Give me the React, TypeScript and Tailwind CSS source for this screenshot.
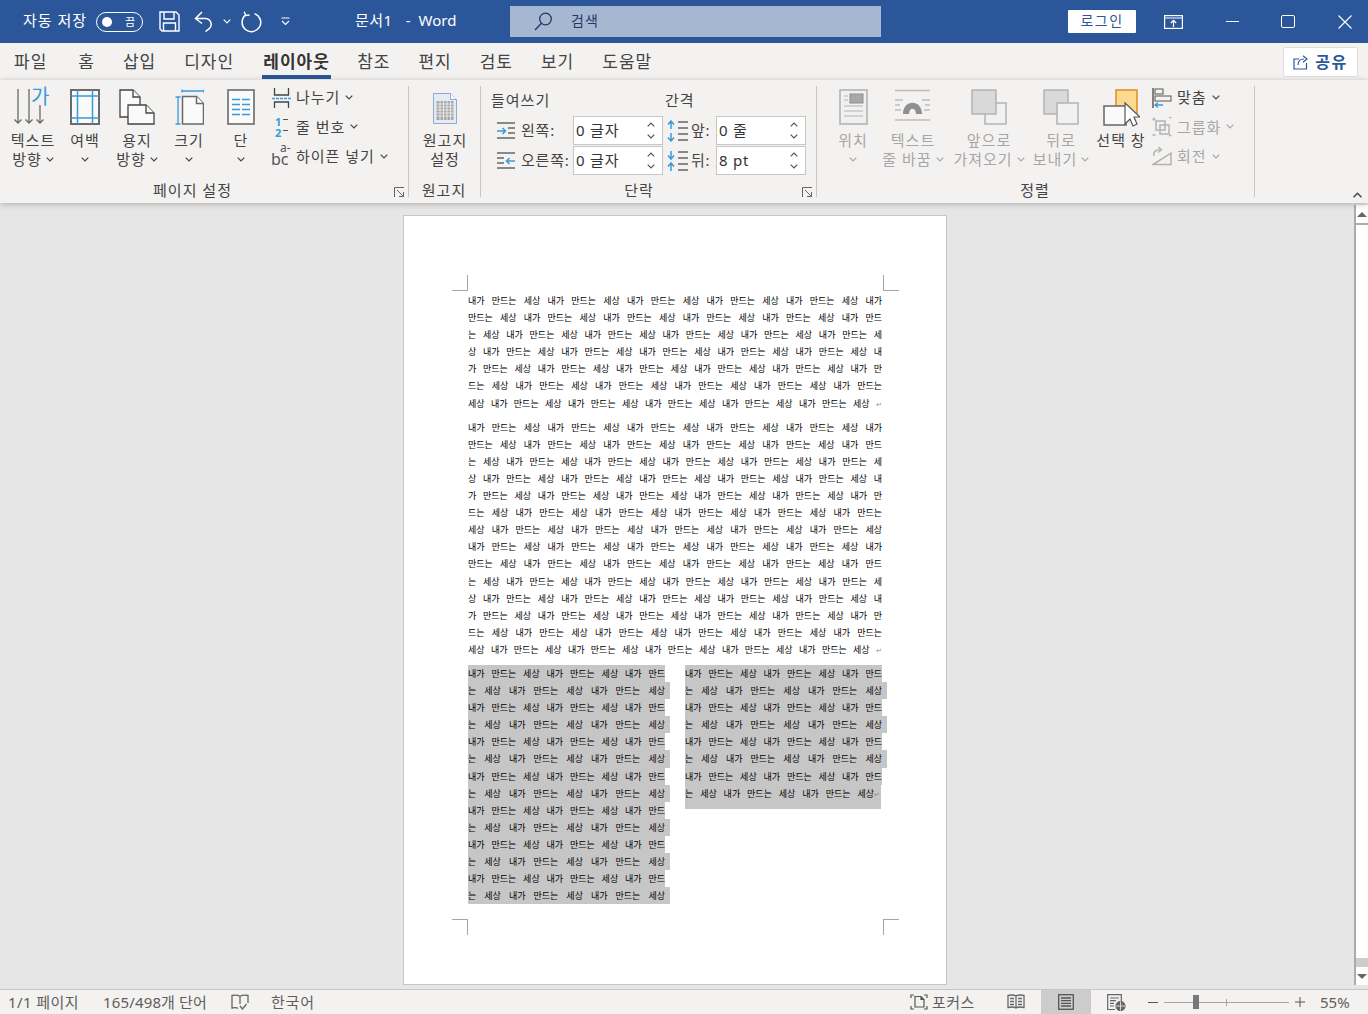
import type { ReactNode } from "react"

const GRAY = "#6a6a6a"
const BLUE = "#3a9ad9"

function Chevron({ color = "#444", up = false, className = "" }: { color?: string; up?: boolean; className?: string }) {
  return (
    <svg width="8" height="5" viewBox="0 0 8 5" fill="none" stroke={color} strokeWidth="1.2" className={`inline-block shrink-0 ${className}`}>
      <path d={up ? "M.7 4.3 4 1l3.3 3.3" : "M.7.7 4 4 7.3.7"} />
    </svg>
  )
}

function Launcher() {
  return (
    <svg width="11" height="11" viewBox="0 0 11 11" fill="none" stroke="#666" strokeWidth="1">
      <path d="M.5 10V.5H10M3 3l6.5 6.5M9.5 5v4.5H5" />
    </svg>
  )
}

function TitleBar() {
  return (
    <div className="h-[43px] bg-[#2b579a] flex items-center text-white shrink-0">
      <span className="ml-[23px] w-[73px] pb-[2px] text-[15px] leading-none tracking-[1px] whitespace-nowrap">자동 저장</span>
      <div className="w-[47px] h-[20px] rounded-full border border-white flex items-center justify-between pl-[5px] pr-[7px]">
        <span className="w-[10px] h-[10px] rounded-full bg-white" />
        <span className="text-[11px] leading-none">끔</span>
      </div>
      <svg className="ml-[16px]" width="21" height="21" viewBox="0 0 21 21" fill="none" stroke="#fff" strokeWidth="1.4">
        <path d="M1 1h16l3 3v16H3l-2-2z" />
        <path d="M5 1v7h10V1M4.500 20v-8h12v8" />
      </svg>
      <svg className="ml-[14px]" width="20" height="21" viewBox="0 0 20 21" fill="none" stroke="#fff" strokeWidth="1.5">
        <path d="M8 1 1.500 7.500 8 12.500M2 7.500h9.500a5.800 5.800 0 0 1 3.500 10.300L11.500 20.500" />
      </svg>
      <Chevron color="#fff" className="ml-[9px]" />
      <svg className="ml-[10px]" width="21" height="22" viewBox="0 0 21 22" fill="none" stroke="#fff" strokeWidth="1.5">
        <path d="M13.500 2.600a9.300 9.300 0 1 1-9 1.600M3.200 .8l1.500 3.700 3.900-.6" />
      </svg>
      <svg className="ml-[19px]" width="9" height="9" viewBox="0 0 9 9" fill="none" stroke="#fff" strokeWidth="1.1">
        <path d="M.5 1h8M1 4l3.500 3.500L8 4" />
      </svg>
      <div className="ml-[65px] w-[155px] pb-[2px] flex text-[15px] leading-none whitespace-nowrap shrink-0">
        <span className="tracking-[.5px]">문서1</span>
        <span className="ml-[13px]">-</span>
        <span className="ml-[8px]">Word</span>
      </div>
      <div className="w-[371px] h-[31px] bg-[#a5b7d1] flex items-center text-[#1f3864] shrink-0">
        <svg className="ml-[24px]" width="19" height="19" viewBox="0 0 19 19" fill="none" stroke="#1f3864" strokeWidth="1.3">
          <circle cx="11.500" cy="7" r="5.800" />
          <path d="M7.500 11.200 1 18" />
        </svg>
        <span className="ml-[18px] pb-[2px] text-[14px] leading-none tracking-[1px]">검색</span>
      </div>
      <div className="ml-[187px] w-[68px] h-[23px] pb-[2px] bg-white rounded-[1px] flex items-center justify-center text-[#2b579a] text-[14px] leading-none tracking-[1.5px]">로그인</div>
      <svg className="ml-[28px]" width="19" height="14" viewBox="0 0 19 14" fill="none" stroke="#fff" strokeWidth="1.2">
        <rect x=".6" y=".6" width="17.800" height="12.800" />
        <path d="M1 3h17M9.500 12V5.500M6.800 8l2.700-2.700L12.200 8" />
      </svg>
      <div className="ml-[43px] w-[13px] h-px bg-white" />
      <div className="ml-[42px] w-[14px] h-[13px] rounded-[2px] border border-white" />
      <svg className="ml-[43px]" width="14" height="14" viewBox="0 0 14 14" stroke="#fff" strokeWidth="1.1">
        <path d="M.5.5l13 13M13.500.5l-13 13" />
      </svg>
    </div>
  )
}

const TABS = ["파일", "홈", "삽입", "디자인", "레이아웃", "참조", "편지", "검토", "보기", "도움말"]

function TabRow() {
  return (
    <div className="h-[37px] bg-[#f3f2f1] flex items-start shrink-0 pl-[14px] pt-[4px] text-[17px] tracking-[1px] text-[#444] relative">
      <div className="flex gap-[28px]">
        {TABS.map((t) =>
          t === "레이아웃" ? (
            <div key={t} className="flex flex-col items-center font-semibold text-[#333] mr-[-2px]">
              <span className="h-[28px] leading-[30px]">{t}</span>
              <span className="w-[69px] h-[4px] bg-[#2b579a]" />
            </div>
          ) : (
            <span key={t} className={`h-[28px] leading-[30px] ${t === "파일" ? "mr-[3px]" : ""}`}>{t}</span>
          ),
        )}
      </div>
      <div className="ml-auto mr-[10px] w-[75px] h-[30px] bg-white border border-[#e1dfdd] rounded-[2px] flex items-center justify-center gap-[6px] text-[#2b579a] text-[16px] font-semibold">
        <svg width="16" height="15" viewBox="0 0 16 15" fill="none" stroke="#2b579a" strokeWidth="1.2">
          <path d="M6 4H1v10h12.500V8M5 10c0-4 2.500-6 6-6M10 .8 14 4l-4 3.200" />
        </svg>
        <span className="leading-none tracking-[1.5px]">공유</span>
      </div>
    </div>
  )
}

function BigBtn({ w, icon, lines, chev, off }: { w: string; icon: ReactNode; lines: string[]; chev?: boolean; off?: boolean }) {
  const color = off ? "#a6a6a6" : "#444"
  return (
    <div className={`${w} flex flex-col items-center shrink-0 text-[15px] tracking-[1px] whitespace-nowrap`} style={{ color }}>
      <div className="h-[50px] flex items-start justify-center pt-[9px]">{icon}</div>
      <span className="h-[20px] leading-[20px]">{lines[0]}</span>
      <span className="h-[19px] leading-[19px] flex items-center gap-[4px]">
        {lines[1]}
        {chev && <Chevron color={off ? "#a6a6a6" : "#444"} />}
      </span>
    </div>
  )
}

function SmallBtn({ icon, label, off }: { icon: ReactNode; label: string; off?: boolean }) {
  return (
    <div className="h-[29.3px] flex items-center whitespace-nowrap text-[15px] tracking-[1px] gap-[5px]" style={{ color: off ? "#a6a6a6" : "#444" }}>
      <span className="w-[20px] h-[24px] flex items-center justify-center shrink-0">{icon}</span>
      {label}
      <Chevron color={off ? "#a6a6a6" : "#444"} />
    </div>
  )
}

function Group({ w, label, launcher, pr, children }: { w: string; label: string; launcher?: boolean; pr: string; children: ReactNode }) {
  return (
    <div className={`${w} shrink-0 flex flex-col relative`}>
      <div className="h-[101px] flex">{children}</div>
      <div className={`text-center text-[15px] leading-[19px] tracking-[1px] text-[#444] ${pr}`}>{label}</div>
      {launcher && (
        <div className="absolute right-[4px] bottom-[5px]">
          <Launcher />
        </div>
      )}
      <div className="absolute right-0 top-[6px] w-px h-[111px] bg-[#c8c6c4]" />
    </div>
  )
}

const iconTextDir = (
  <svg width="38" height="36" viewBox="0 0 38 36" fill="none" overflow="visible">
    <g stroke={GRAY} strokeWidth="1.3">
      <path d="M4 0v34M.5 30.500 4 34l3.500-3.500M15 0v34M11.500 30.500 15 34l3.500-3.500M26 16v18M22.500 30.500 26 34l3.500-3.500" />
    </g>
    <text x="17" y="15" fontSize="20" fill={BLUE}>가</text>
  </svg>
)
const iconMargin = (
  <svg width="30" height="36" viewBox="0 0 30 36" fill="#fafafa">
    <rect x="1" y="1" width="28" height="34" stroke={GRAY} strokeWidth="2" />
    <path d="M7.500 1v34M22.500 1v34M1 7h28M1 29h28" stroke={BLUE} strokeWidth="1.500" />
  </svg>
)
const iconOrient = (
  <svg width="36" height="36" viewBox="0 0 36 36" fill="#fafafa" stroke="#444" strokeWidth="1.300">
    <path d="M1 1h13l7 7v20H1z" />
    <path d="M14 1v7h7" />
    <path d="M9 16h18l8 8v11H9z" />
    <path d="M27 16v8h8" />
  </svg>
)
const iconSize = (
  <svg width="29" height="36" viewBox="0 0 29 36" fill="#fafafa">
    <path d="M3 8v27M.500 8h5M.500 35h5M7 2h22M7 .5v3M29 .5v3" stroke={BLUE} strokeWidth="1.300" />
    <path d="M7.500 7.500h14l7 7v20.500H7.500z" stroke={GRAY} strokeWidth="1.500" />
    <path d="M21.500 7.500v7h7" stroke={GRAY} strokeWidth="1.500" />
  </svg>
)
const iconColumns = (
  <svg width="28" height="36" viewBox="0 0 28 36" fill="#fafafa">
    <rect x="1" y="1" width="26" height="34" stroke={GRAY} strokeWidth="1.600" />
    <path d="M5 10.500h8M15 10.500h8M5 15.500h8M15 15.500h8M5 20.500h8M15 20.500h8M5 25.500h8M15 25.500h8" stroke={BLUE} strokeWidth="1.500" />
  </svg>
)
const iconBreaks = (
  <svg width="19" height="20" viewBox="0 0 19 20" fill="none" stroke="#444" strokeWidth="1.300">
    <path d="M2.500 0v7h14V0M2.500 20v-6h14v6" />
    <path d="M0 10.500h19" stroke={BLUE} strokeDasharray="3 1" />
  </svg>
)
const iconLineNum = (
  <div className="relative w-[18px] h-[22px] pl-[3px] text-[11px] font-bold text-[#3a9ad9] tracking-normal">
    <div className="h-[11px] leading-[11px]">1</div>
    <div className="h-[11px] leading-[11px]">2</div>
    <div className="absolute left-[11px] top-[3px] w-[5px] h-px bg-[#555]" />
    <div className="absolute left-[11px] top-[14px] w-[5px] h-px bg-[#555]" />
  </div>
)
const iconHyphen = (
  <div className="relative w-[20px] h-[24px] text-[#555] tracking-normal">
    <span className="absolute left-[9px] top-[-1px] text-[12px] leading-[9px]">a-</span>
    <span className="absolute left-0 top-[8px] text-[16px] leading-[15px]">bc</span>
  </div>
)
const iconManuscript = (
  <svg width="24" height="31" viewBox="0 0 24 31">
    <path d="M.5.500h17l6 6v24H.5z" fill="#e4ebf5" stroke="#8faad0" />
    <path d="M17.500.500v6h6" fill="#fff" stroke="#8faad0" />
    <rect x="3.500" y="8" width="17" height="19" fill="#a8a8a8" />
    <path d="M3.500 11h17M3.500 14h17M3.500 17h17M3.500 20h17M3.500 23h17M7 8v19M10.500 8v19M14 8v19M17.500 8v19" stroke="#f2f2f2" strokeWidth=".8" />
  </svg>
)
const iconPosition = (
  <svg width="29" height="36" viewBox="0 0 29 36" fill="none">
    <rect x="1" y="1" width="27" height="34" fill="#f0f0f0" stroke="#b3b3b3" strokeWidth="1.600" />
    <rect x="11" y="5" width="13" height="9" fill="#a8a8a8" stroke="#8d8d8d" />
    <path d="M5 7h4M5 11h4M5 17h19M5 22h19M5 27h19" stroke="#b3b3b3" strokeWidth="1.200" />
  </svg>
)
const iconWrap = (
  <svg width="36" height="32" viewBox="0 0 36 32" fill="none">
    <path d="M0 1.500h35M0 31h35M0 11h8M27 11h8M0 16h5M30 16h5M0 21h6M29 21h6" stroke="#bdbdbd" strokeWidth="1.500" />
    <path d="M8 25c0-15 19-15 19 0h-6c0-7-7-7-7 0z" fill="#8f8f8f" />
  </svg>
)
const iconForward = (
  <svg width="36" height="36" viewBox="0 0 36 36">
    <rect x="14" y="14" width="21" height="21" fill="#f1f1f1" stroke="#b3b3b3" strokeWidth="1.500" />
    <rect x="1" y="1" width="24" height="24" fill="#d9d9d9" stroke="#b3b3b3" strokeWidth="1.500" />
  </svg>
)
const iconBackward = (
  <svg width="36" height="36" viewBox="0 0 36 36">
    <rect x="1" y="1" width="24" height="24" fill="#d9d9d9" stroke="#b3b3b3" strokeWidth="1.500" />
    <rect x="14" y="14" width="21" height="21" fill="#f1f1f1" stroke="#b3b3b3" strokeWidth="1.500" />
  </svg>
)
const iconPane = (
  <svg width="37" height="38" viewBox="0 0 37 38">
    <rect x="13" y="1" width="21" height="24" fill="#fbd98e" stroke="#e08b2c" strokeWidth="1.500" />
    <rect x="1" y="17" width="22" height="19" fill="#fafafa" stroke="#666" strokeWidth="1.500" />
    <path d="M22 14v21l5-5 3 7 4-2-3-7h6z" fill="#fff" stroke="#555" strokeWidth="1.200" />
  </svg>
)
const iconAlign = (
  <svg width="20" height="20" viewBox="0 0 20 20" fill="none">
    <path d="M1 0v20" stroke="#444" strokeWidth="1.300" />
    <rect x="3" y="1" width="8" height="5" stroke="#555" />
    <rect x="3" y="8" width="16" height="5" stroke="#555" />
    <path d="M11 17H3M6 14.500 3 17l3 2.500" stroke={BLUE} strokeWidth="1.300" />
  </svg>
)
const iconGroup = (
  <svg width="20" height="20" viewBox="0 0 20 20" fill="none" stroke="#b3b3b3" strokeWidth="1.500">
    <rect x="4" y="4" width="9" height="9" />
    <rect x="8" y="8" width="9" height="9" />
    <path d="M.5 2.500h3M2 .5v3M17 .5h2.500M.5 18h3M17 18.500h2.500" />
  </svg>
)
const iconRotate = (
  <svg width="20" height="20" viewBox="0 0 20 20" fill="none" stroke="#b3b3b3" strokeWidth="1.500">
    <path d="M1 18.500 19 7v11.500zM2 10c-1-4 2-7 7-6M6.500 1 9.500 4 6 6.500" />
  </svg>
)

function Spin({ value }: { value: string }) {
  return (
    <div className="w-[90px] h-[29px] bg-white border border-[#c8c6c4] flex items-center justify-between pl-[2px] pr-[7px] text-[15px] tracking-[.8px] text-[#333] shrink-0">
      <span className="leading-none">{value}</span>
      <span className="flex flex-col gap-[7px]">
        <Chevron color="#555" up />
        <Chevron color="#555" />
      </span>
    </div>
  )
}

const iconIndentL = (
  <svg className="shrink-0" width="20" height="18" viewBox="0 0 20 18" fill="none" stroke="#666" strokeWidth="1.500">
    <path d="M1 1h18M12 6h7M12 11h7M1 16h18" />
    <path d="M1 9h8M6.500 6 9.500 9l-3 3" stroke={BLUE} />
  </svg>
)
const iconIndentR = (
  <svg className="shrink-0" width="20" height="18" viewBox="0 0 20 18" fill="none" stroke="#666" strokeWidth="1.500">
    <path d="M1 1h18M1 6h7M1 11h7M1 16h18" />
    <path d="M19 9h-8M13.500 6l-3 3 3 3" stroke={BLUE} />
  </svg>
)
const iconSpaceBefore = (
  <svg className="shrink-0" width="22" height="22" viewBox="0 0 22 22" fill="none" stroke="#666" strokeWidth="1.500">
    <path d="M11 2h10M11 8h10M11 14h10M11 20h10" />
    <path d="M4 1v8M1 4.500 4 1l3 3.500M4 13v8M1 17.500 4 21l3-3.500" stroke={BLUE} />
  </svg>
)
const iconSpaceAfter = (
  <svg className="shrink-0" width="22" height="22" viewBox="0 0 22 22" fill="none" stroke="#666" strokeWidth="1.500">
    <path d="M11 2h10M11 8h10M11 14h10M11 20h10" />
    <path d="M4 1v8M1 5.500 4 9l3-3.500M4 13v8M1 16.500 4 13l3 3.500" stroke={BLUE} />
  </svg>
)

function ParaRow({ i1, l1, v1, i2, l2, v2 }: { i1: ReactNode; l1: string; v1: string; i2: ReactNode; l2: string; v2: string }) {
  return (
    <div className="flex items-center h-[29px] text-[15px] text-[#444] whitespace-nowrap">
      <div className="w-[92px] pl-[15px] flex items-center gap-[5px] shrink-0">
        {i1}
        <span className="tracking-[.8px]">{l1}</span>
      </div>
      <Spin value={v1} />
      <div className="w-[53px] pl-[4px] flex items-center gap-[2px] shrink-0">
        {i2}
        <span className="tracking-[.8px]">{l2}</span>
      </div>
      <Spin value={v2} />
    </div>
  )
}

function Ribbon() {
  return (
    <div className="h-[123px] bg-[#f3f2f1] flex shrink-0 relative z-10 shadow-[0_1px_6px_rgba(0,0,0,0.25)]">
      <Group w="w-[409px]" label="페이지 설정" pr="pr-[24px]" launcher>
        <div className="flex pl-[7px]">
          <BigBtn w="w-[52px]" icon={iconTextDir} lines={["텍스트", "방향"]} chev />
          <BigBtn w="w-[52px]" icon={iconMargin} lines={["여백", ""]} chev />
          <BigBtn w="w-[52px]" icon={iconOrient} lines={["용지", "방향"]} chev />
          <BigBtn w="w-[52px]" icon={iconSize} lines={["크기", ""]} chev />
          <BigBtn w="w-[52px]" icon={iconColumns} lines={["단", ""]} chev />
          <div className="flex flex-col pl-[4px] pt-[3px]">
            <SmallBtn icon={iconBreaks} label="나누기" />
            <SmallBtn icon={iconLineNum} label="줄 번호" />
            <SmallBtn icon={iconHyphen} label="하이픈 넣기" />
          </div>
        </div>
      </Group>
      <Group w="w-[72px]" label="원고지" pr="pr-[2px]">
        <div className="w-full">
          <BigBtn w="w-full" icon={<div className="pt-[4px]">{iconManuscript}</div>} lines={["원고지", "설정"]} />
        </div>
      </Group>
      <Group w="w-[336px]" label="단락" pr="pr-[20px]" launcher>
        <div className="flex flex-col w-full">
          <div className="h-[36px] pt-[9px] flex text-[15px] leading-[22px] tracking-[1px] text-[#444]">
            <span className="ml-[10px] w-[174px]">들여쓰기</span>
            <span>간격</span>
          </div>
          <ParaRow i1={iconIndentL} l1="왼쪽:" v1="0 글자" i2={iconSpaceBefore} l2="앞:" v2="0 줄" />
          <div className="h-[1px]" />
          <ParaRow i1={iconIndentR} l1="오른쪽:" v1="0 글자" i2={iconSpaceAfter} l2="뒤:" v2="8 pt" />
        </div>
      </Group>
      <Group w="w-[438px]" label="정렬" pr="pr-[2px]">
        <div className="flex pl-[9px]">
          <BigBtn w="w-[54px]" icon={iconPosition} lines={["위치", ""]} chev off />
          <BigBtn w="w-[66px]" icon={iconWrap} lines={["텍스트", "줄 바꿈"]} chev off />
          <BigBtn w="w-[86px]" icon={iconForward} lines={["앞으로", "가져오기"]} chev off />
          <BigBtn w="w-[58px]" icon={iconBackward} lines={["뒤로", "보내기"]} chev off />
          <BigBtn w="w-[62px]" icon={iconPane} lines={["선택 창", " "]} />
          <div className="flex flex-col pt-[3px]">
            <SmallBtn icon={iconAlign} label="맞춤" />
            <SmallBtn icon={iconGroup} label="그룹화" off />
            <SmallBtn icon={iconRotate} label="회전" off />
          </div>
        </div>
      </Group>
      <div className="flex-1 flex items-end justify-end pr-[5px] pb-[5px]">
        <Chevron color="#444" up className="w-[11px] h-[6px]" />
      </div>
    </div>
  )
}

const SRC = "내가 만드는 세상 ".repeat(80)
const CYCLE = [
  [0, 52],
  [53, 105],
  [105, 158],
  [158, 211],
  [211, 264],
  [264, 316],
  [317, 369],
]
const ODD = "내가 만드는 세상 내가 만드는 세상 내가 만드"
const EVEN = "는 세상 내가 만드는 세상 내가 만드는 세상"

function Mark({ className }: { className: string }) {
  return <div className={`absolute w-[16px] h-[16px] border-[#a6a6a6] ${className}`} />
}

function Pilcrow() {
  return <span className="text-[#8a8a8a] text-[7px] leading-none">↵</span>
}

function Line({ text, end }: { text: string; end?: boolean }) {
  return (
    <div className="w-[414px] h-[17.1px] leading-[17.1px] text-[9px] [text-align:justify] [text-align-last:justify]">
      {text}
      {end && <> <Pilcrow /></>}
    </div>
  )
}

function ColLine({ text, even, end }: { text: string; even?: boolean; end?: boolean }) {
  const box = end ? "w-[196px] h-[24px]" : even ? "w-[202px] h-[17.1px]" : "w-[197px] h-[17.1px]"
  return (
    <div className={`bg-[#c6c6c6] ${box}`}>
      <div className={`${end ? "w-[195px]" : "w-[197px]"} leading-[17.1px] text-[9px] [text-align:justify] [text-align-last:justify]`}>
        {text}
        {end && <Pilcrow />}
      </div>
    </div>
  )
}

function Page() {
  const right = [0, 1, 2, 3, 4, 5, 6]
  const left = [...right, 7, 8, 9, 10, 11, 12, 13]
  return (
    <div className="w-[544px] h-[770px] bg-white border border-[#c6c6c6] relative pl-[64px] pt-[76px] text-black shrink-0">
      <Mark className="left-[48px] top-[59px] border-r border-b" />
      <Mark className="left-[479px] top-[59px] border-l border-b" />
      <Mark className="left-[48px] top-[703px] border-r border-t" />
      <Mark className="left-[479px] top-[703px] border-l border-t" />
      <div className="flex flex-col">
        {CYCLE.map(([a, b], i) => (
          <Line key={i} text={SRC.slice(a, b)} end={i === 6} />
        ))}
      </div>
      <div className="flex flex-col mt-[7px]">
        {[...CYCLE, ...CYCLE].map(([a, b], i) => (
          <Line key={i} text={SRC.slice(a, b)} end={i === 13} />
        ))}
      </div>
      <div className="flex mt-[7px]">
        <div className="w-[217px] shrink-0">
          {left.map((i) => (
            <ColLine key={i} text={i % 2 ? EVEN : ODD} even={i % 2 === 1} />
          ))}
        </div>
        <div>
          {right.map((i) => (
            <ColLine key={i} text={i % 2 ? EVEN : ODD} even={i % 2 === 1} />
          ))}
          <ColLine text={EVEN} end />
        </div>
      </div>
    </div>
  )
}

function ScrollBar() {
  return (
    <div className="w-[14px] shrink-0 pt-[2px] pb-[4px] flex flex-col">
      <div className="h-[18px] bg-white border-l-2 border-[#ababab] flex items-center justify-center">
        <div className="w-0 h-0 border-x-[5px] border-x-transparent border-b-[5px] border-b-[#666]" />
      </div>
      <div className="h-[2px] bg-[#ababab]" />
      <div className="h-[733px] bg-white border-l-2 border-[#ababab]" />
      <div className="h-[9px] bg-[#cdcdcd] border-l-2 border-[#ababab]" />
      <div className="h-[18px] bg-white border-l-2 border-[#ababab] flex items-center justify-center">
        <div className="w-0 h-0 border-x-[5px] border-x-transparent border-t-[5px] border-t-[#666]" />
      </div>
    </div>
  )
}

function DocArea() {
  return (
    <div className="h-[786px] bg-[#e6e6e6] flex shrink-0">
      <div className="flex-1 pl-[403px] pt-[12px]">
        <Page />
      </div>
      <ScrollBar />
    </div>
  )
}

function StatusBar() {
  return (
    <div className="h-[25px] bg-[#f3f2f1] border-t border-[#c6c6c6] flex items-center text-[15px] tracking-[.4px] text-[#605e5c] shrink-0 whitespace-nowrap">
      <span className="ml-[8px] w-[95px] shrink-0">1/1 페이지</span>
      <span className="w-[128px] shrink-0 tracking-[.15px]">165/498개 단어</span>
      <svg className="shrink-0" width="18" height="17" viewBox="0 0 18 17" fill="none" stroke="#666" strokeWidth="1.300">
        <path d="M9 2.500C7 1 4 1 1 1.500V14c3-.5 5-.5 6 .5M9 2.500C11 1 14 1 17 1.500V9M9 2.500V10M9 12l2.500 3 4-5" />
      </svg>
      <span className="ml-[22px] w-[46px] shrink-0 tracking-[.8px]">한국어</span>
      <svg className="ml-[593px] shrink-0" width="18" height="16" viewBox="0 0 18 16" fill="none" stroke="#555" strokeWidth="1.200">
        <path d="M5 2.500h6l3 3V13H5zM11 2.500v3h3M1 4V1h3M14 1h3v3M1 12v3h3M14 15h3v-3" />
      </svg>
      <span className="ml-[4px] w-[75px] shrink-0">포커스</span>
      <svg className="shrink-0" width="18" height="16" viewBox="0 0 18 16" fill="none" stroke="#666" strokeWidth="1.300">
        <path d="M9 2C7 .8 4 .8 1 1.500v12c3-.7 6-.7 8 .5 2-1.200 5-1.200 8-.5v-12C14 .8 11 .8 9 2zM9 2v12M3 4.500h4M3 7.500h4M3 10.500h4M11 4.500h4M11 7.500h4M11 10.500h4" />
      </svg>
      <div className="ml-[16px] w-[50px] h-[24px] bg-[#cccccc] flex items-center justify-center shrink-0">
        <svg width="16" height="16" viewBox="0 0 16 16" fill="none" stroke="#555" strokeWidth="1.300">
          <rect x=".7" y=".7" width="14.600" height="14.600" />
          <path d="M3 4h10M3 6.700h10M3 9.400h10M3 12h10" />
        </svg>
      </div>
      <svg className="ml-[16px] shrink-0" width="19" height="17" viewBox="0 0 19 17" fill="none" stroke="#666" strokeWidth="1.200">
        <path d="M8 15.500H.7V.7h13.600V7M3 4h9M3 6.700h6M3 9.400h4M3 12h4" />
        <circle cx="13.500" cy="12" r="4.500" fill="#666" stroke="#666" />
        <path d="M9 12h9M13.500 7.500v9" stroke="#f3f2f1" strokeWidth=".8" />
      </svg>
      <div className="ml-[22px] w-[10px] h-px bg-[#555] shrink-0" />
      <div className="ml-[6px] w-[125px] h-px bg-[#a6a6a6] relative shrink-0">
        <div className="absolute left-[29px] top-[-7px] w-[6px] h-[14px] bg-[#777]" />
        <div className="absolute left-[62px] top-[-3px] w-px h-[7px] bg-[#a6a6a6]" />
      </div>
      <svg className="ml-[6px] shrink-0" width="10" height="10" viewBox="0 0 10 10" stroke="#555" strokeWidth="1">
        <path d="M0 5h10M5 0v10" />
      </svg>
      <span className="ml-[15px] tracking-normal">55%</span>
    </div>
  )
}

export default function App() {
  return (
    <div className="w-[1368px] h-[1014px] overflow-hidden flex flex-col [font-family:'Noto_Sans','Noto_Sans_CJK_KR',sans-serif]">
      <TitleBar />
      <TabRow />
      <Ribbon />
      <DocArea />
      <StatusBar />
    </div>
  )
}
